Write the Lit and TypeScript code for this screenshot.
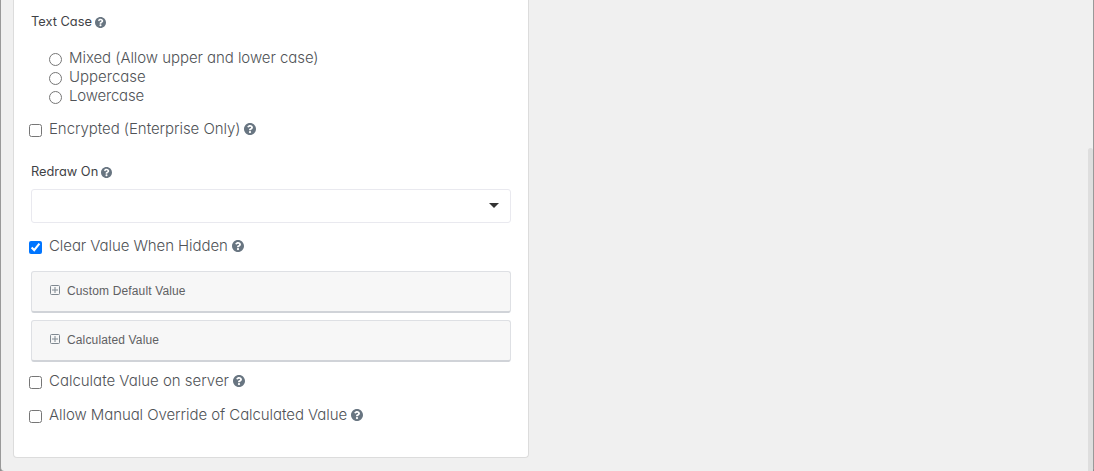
import {LitElement, html, css} from 'lit';
import {customElement, property} from 'lit/decorators.js';

@customElement('help-icon')
export class HelpIcon extends LitElement {
  static styles = css`
    :host {
      display: block;
      width: 12px;
      height: 12px;
      color: #687581;
    }

    :host([small]) {
      width: 11px;
      height: 11px;
    }

    svg {
      display: block;
      width: 100%;
      height: 100%;
    }
  `;

  render() {
    return html`
      <svg viewBox="8 8 496 496" fill="currentColor">
        <path d="M504 256c0 136.997-111.043 248-248 248S8 392.997 8 256C8 119.083 119.043 8 256 8s248 111.083 248 248zM262.655 90c-54.497 0-89.255 22.957-116.549 63.758-3.536 5.286-2.353 12.415 2.715 16.258l34.699 26.31c5.205 3.947 12.621 3.008 16.665-2.122 17.864-22.658 30.113-35.797 57.303-35.797 20.429 0 45.698 13.148 45.698 32.958 0 14.976-12.363 22.667-32.534 33.976C247.128 238.528 216 254.941 216 296v4c0 6.627 5.373 12 12 12h56c6.627 0 12-5.373 12-12v-1.333c0-28.462 83.186-29.647 83.186-106.667 0-58.002-60.165-102-116.531-102zM256 338c-25.365 0-46 20.635-46 46 0 25.364 20.635 46 46 46s46-20.636 46-46c0-25.364-20.635-46-46-46z"/>
      </svg>
    `;
  }
}

@customElement('check-field')
export class CheckField extends LitElement {
  static styles = css`
    :host {
      display: block;
    }

    .check {
      display: flex;
      height: 20px;
      line-height: 20px;
      align-items: center;
      white-space: nowrap;
    }

    input {
      width: 13px;
      height: 13px;
      margin: 2px 7px 0 0;
    }

    help-icon {
      margin-left: 4px;
    }
  `;

  @property() label = '';
  @property({type: Number}) spacing = 0;
  @property({type: Boolean}) checked = false;

  render() {
    return html`
      <label class="check">
        <input type="checkbox" .checked=${this.checked}>
        <span style="letter-spacing: ${this.spacing}px">${this.label}</span>
        <help-icon></help-icon>
      </label>
    `;
  }
}

@customElement('collapsed-panel')
export class CollapsedPanel extends LitElement {
  static styles = css`
    :host {
      display: block;
    }

    .panel {
      box-sizing: border-box;
      height: 42px;
      display: flex;
      align-items: center;
      gap: 6px;
      padding: 0 0 2px 18px;
      border: 1px solid #dee0e4;
      border-bottom: 2px solid #d0d3d8;
      border-radius: 3px;
      background: #f7f7f7;
      color: #5f6163;
      font: 12px/16px "Liberation Sans", sans-serif;
      letter-spacing: 0.14px;
    }

    svg {
      width: 11px;
      height: 11px;
      fill: none;
      stroke: #7f8890;
    }
  `;

  @property() label = '';

  render() {
    return html`
      <div class="panel">
        <svg viewBox="0 0 11 11">
          <rect x="0.5" y="0.5" width="9" height="9" rx="1"/>
          <path d="M2 5h6M5 2v6"/>
        </svg>
        <span>${this.label}</span>
      </div>
    `;
  }
}

@customElement('app-root')
export class AppRoot extends LitElement {
  static styles = css`
    :host {
      display: block;
      height: 471px;
      overflow: hidden;
      background: #8d8d8d;
      color: #505357;
      font: 300 15px/20px Inter, sans-serif;
      font-feature-settings: "cv11";
    }

    .dialog {
      box-sizing: border-box;
      height: 471px;
      display: flex;
      justify-content: space-between;
      border: solid #999;
      border-width: 0 1px;
      border-bottom-left-radius: 4px;
      border-bottom-right-radius: 4px;
      background: #f0f0f0;
    }

    .card {
      box-sizing: border-box;
      width: 516px;
      height: 458px;
      margin-left: 12px;
      padding: 12px 17px 0;
      border: 1px solid #dcdcdc;
      border-top: 0;
      border-radius: 0 0 4px 4px;
      background: #fff;
    }

    .title {
      display: flex;
      align-items: center;
      gap: 3px;
      height: 20px;
      color: #3f4246;
      font-size: 12.8px;
      font-weight: 400;
    }

    .radios {
      margin: 16px 0 14px 18px;
    }

    .radio {
      display: flex;
      align-items: center;
      height: 19px;
      white-space: nowrap;
    }

    .radio input {
      width: 13px;
      height: 13px;
      margin: 4px 7px 0 0;
    }

    check-field {
      margin-left: -2px;
    }

    .redraw {
      margin-top: 23px;
    }

    .select {
      box-sizing: border-box;
      display: flex;
      align-items: center;
      justify-content: flex-end;
      height: 34px;
      margin: 7px 0 13px;
      padding-right: 11px;
      border: 1px solid #e9e9ef;
      border-radius: 3px;
    }

    .arrow {
      margin-top: -1px;
      border: 5px solid transparent;
      border-top-color: #333;
      border-bottom: 0;
    }

    .panels {
      display: grid;
      gap: 7px;
      margin: 15px 0 9px;
    }

    .override {
      margin-top: 14px;
    }

    .scrollbar {
      width: 5px;
      margin-top: 148px;
      border-radius: 3px 3px 0 0;
      background: #dedede;
    }
  `;

  private cases = [
    {label: 'Mixed (Allow upper and lower case)', spacing: -0.06},
    {label: 'Uppercase', spacing: 0},
    {label: 'Lowercase', spacing: -0.2},
  ];

  render() {
    return html`
      <div class="dialog">
        <div class="card">
          <div class="title"><span>Text Case</span><help-icon small></help-icon></div>
          <div class="radios">
            ${this.cases.map((item) => html`
              <label class="radio">
                <input type="radio" name="case">
                <span style="letter-spacing: ${item.spacing}px">${item.label}</span>
              </label>
            `)}
          </div>
          <check-field label="Encrypted (Enterprise Only)" spacing="-0.06"></check-field>
          <div class="title redraw"><span>Redraw On</span><help-icon small></help-icon></div>
          <div class="select"><div class="arrow"></div></div>
          <check-field label="Clear Value When Hidden" spacing="-0.08" checked></check-field>
          <div class="panels">
            <collapsed-panel label="Custom Default Value"></collapsed-panel>
            <collapsed-panel label="Calculated Value"></collapsed-panel>
          </div>
          <check-field label="Calculate Value on server" spacing="-0.01"></check-field>
          <check-field class="override" label="Allow Manual Override of Calculated Value" spacing="-0.07"></check-field>
        </div>
        <div class="scrollbar"></div>
      </div>
    `;
  }
}
